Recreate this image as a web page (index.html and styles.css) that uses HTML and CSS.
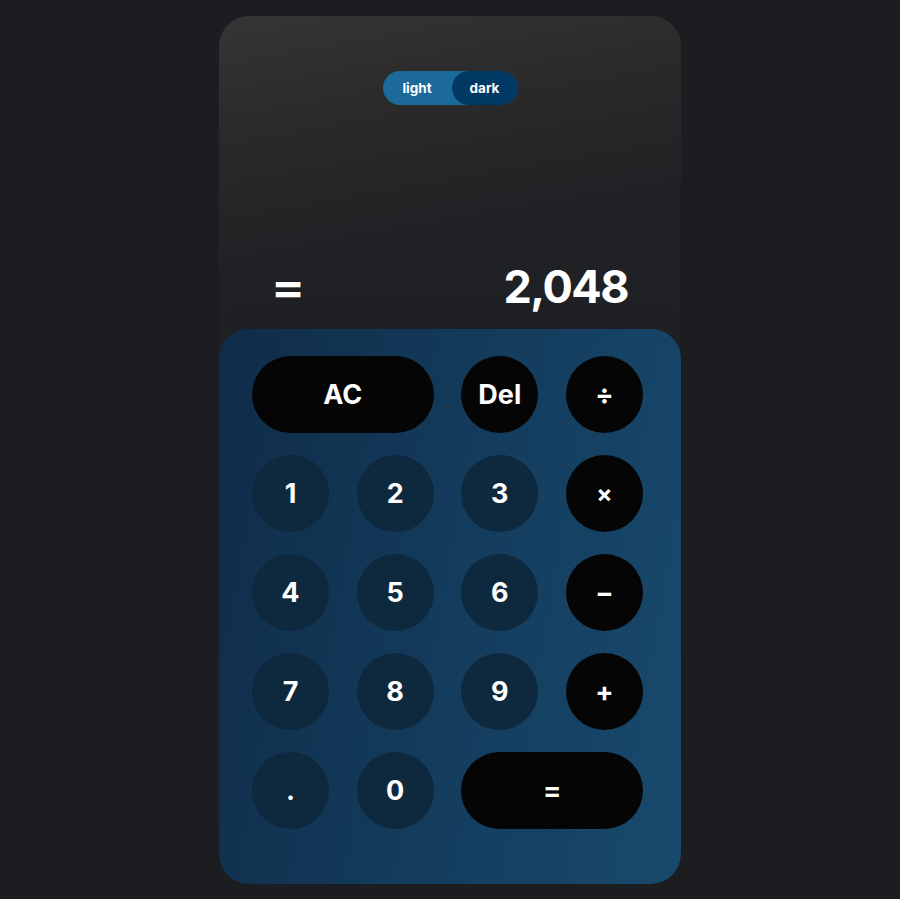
FILE: index.html
```html
<!DOCTYPE html>
<html>
<head>
<meta charset="utf-8">
<link rel="stylesheet" href="styles.css">
</head>
<body>
<div class="calc">
  <div class="screen">
    <div class="toggle">
      <span class="opt">light</span>
      <span class="opt active">dark</span>
    </div>
    <div class="display">
      <span class="eq">=</span>
      <span class="result">2,048</span>
    </div>
  </div>
  <div class="keypad">
    <button class="key op wide">AC</button>
    <button class="key op">Del</button>
    <button class="key op">÷</button>
    <button class="key num">1</button>
    <button class="key num">2</button>
    <button class="key num">3</button>
    <button class="key op small">×</button>
    <button class="key num">4</button>
    <button class="key num">5</button>
    <button class="key num">6</button>
    <button class="key op">−</button>
    <button class="key num">7</button>
    <button class="key num">8</button>
    <button class="key num">9</button>
    <button class="key op">+</button>
    <button class="key num">.</button>
    <button class="key num">0</button>
    <button class="key op wide">=</button>
  </div>
</div>
</body>
</html>
```
FILE: styles.css
```css
html, body {
  margin: 0;
  padding: 0;
  background: #1c1d20;
}
body {
  padding-top: 16px;
  font-family: Inter, "Open Sans", sans-serif;
}
.calc {
  width: 462px;
  height: 868px;
  margin: 0 auto;
  border-radius: 30px;
  overflow: hidden;
  background: linear-gradient(170deg, #353535 0px, #2a2a2b 120px, #202124 260px);
  display: flex;
  flex-direction: column;
}
.screen {
  height: 313px;
  display: flex;
  flex-direction: column;
  align-items: center;
  padding-top: 55px;
  box-sizing: border-box;
}
.toggle {
  display: flex;
  width: 135px;
  height: 34px;
  border-radius: 17px;
  background: #1c6a9a;
  font-size: 13.5px;
  font-weight: 700;
  color: #fff;
}
.opt {
  display: flex;
  align-items: center;
  justify-content: center;
  width: 69px;
}
.opt.active {
  width: 66px;
  border-radius: 17px;
  background: #003a64;
}
.display {
  margin-top: auto;
  width: 100%;
  box-sizing: border-box;
  padding: 0 53px 15px 52px;
  display: flex;
  justify-content: space-between;
  align-items: center;
  color: #fff;
  font-weight: 700;
}
.eq {
  font-size: 42px;
  transform: scaleX(1.2);
  transform-origin: left center;
}
.result {
  font-size: 45px;
  letter-spacing: -1.5px;
}
.keypad {
  flex: 1;
  border-radius: 30px;
  background: linear-gradient(100deg, #0f2c48 0%, #143d5e 55%, #184a6d 100%);
  box-shadow: 0 0 40px rgba(0,0,0,0.08);
  display: grid;
  grid-template-columns: repeat(4, 77px);
  grid-auto-rows: 77px;
  column-gap: 27.67px;
  row-gap: 22px;
  padding: 27px 38px 0 33px;
  align-content: start;
}
.key {
  border: none;
  border-radius: 39px;
  color: #fff;
  font-family: Inter, "Open Sans", sans-serif;
  font-weight: 700;
  font-size: 27px;
  padding: 0;
  display: flex;
  align-items: center;
  justify-content: center;
}
.key.num {
  background: #0e283e;
}
.key.op {
  background: #050505;
}
.key.wide {
  grid-column: span 2;
}
.key.small {
  font-size: 24px;
}
```
